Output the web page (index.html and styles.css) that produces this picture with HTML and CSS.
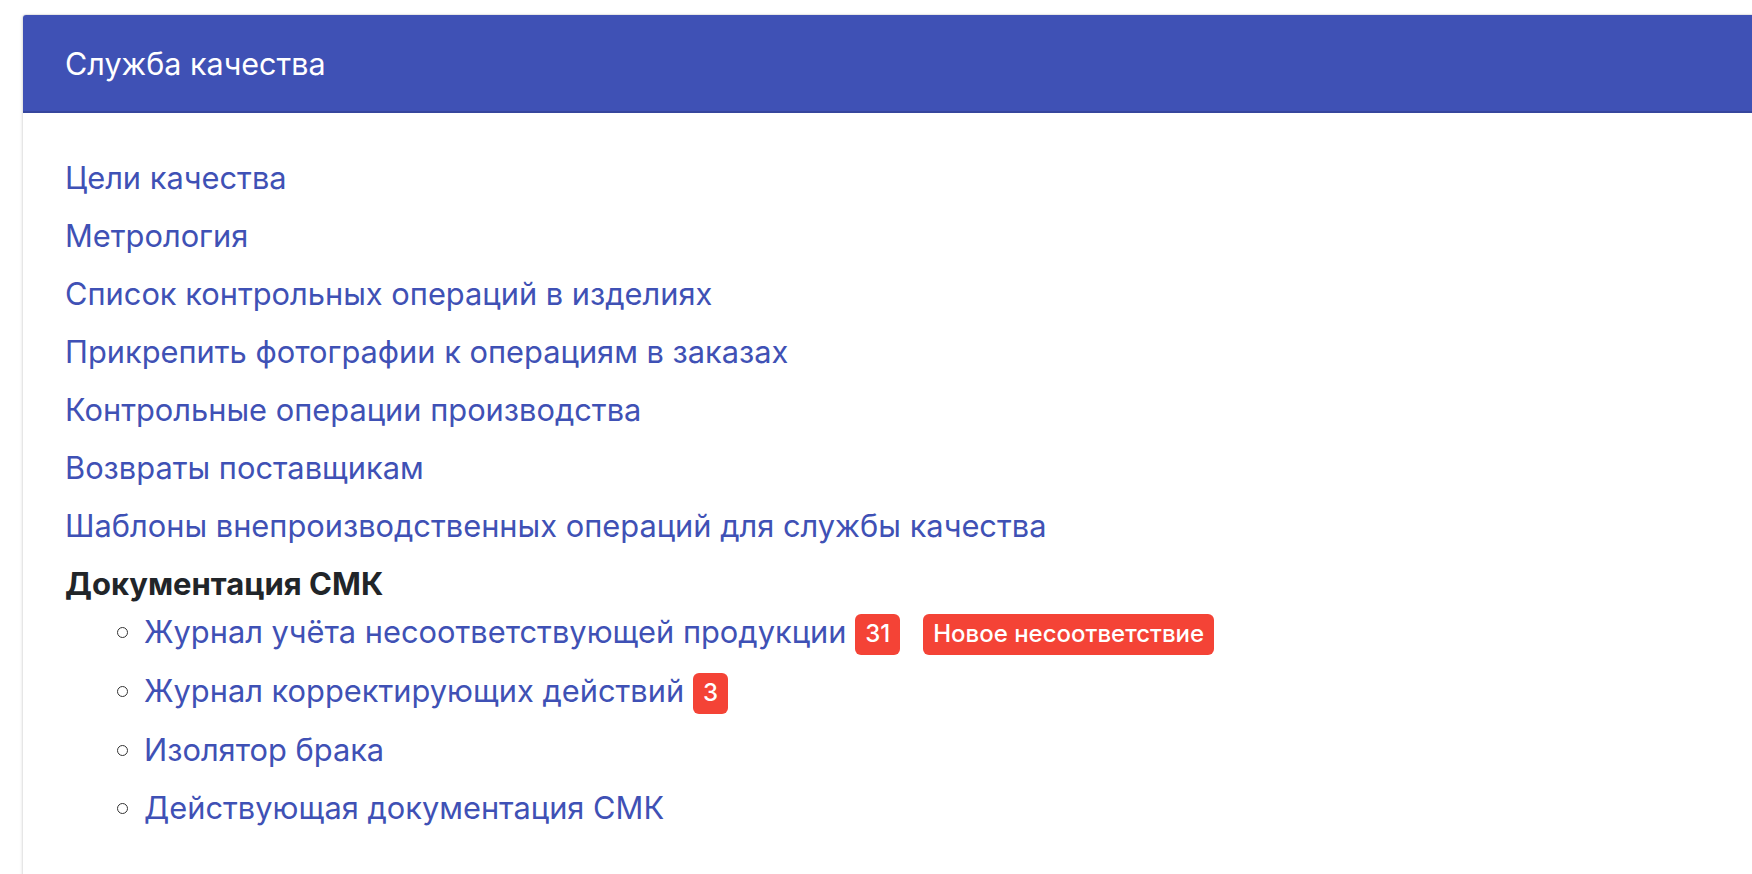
FILE: index.html
```html
<!DOCTYPE html>
<html lang="ru">
<head>
<meta charset="utf-8">
<title>Служба качества</title>
<link rel="stylesheet" href="styles.css">
</head>
<body>
<div class="page">
  <div class="card">
    <div class="card-header">Служба качества</div>
    <div class="card-body">
      <ul class="menu">
        <li><a href="#">Цели качества</a></li>
        <li><a href="#">Метрология</a></li>
        <li><a href="#">Список контрольных операций в изделиях</a></li>
        <li><a href="#">Прикрепить фотографии к операциям в заказах</a></li>
        <li><a href="#">Контрольные операции производства</a></li>
        <li><a href="#">Возвраты поставщикам</a></li>
        <li><a href="#">Шаблоны внепроизводственных операций для службы качества</a></li>
        <li class="group">
          <div class="group-title">Документация СМК</div>
          <ul class="submenu">
            <li><span class="bullet"></span><a href="#">Журнал учёта несоответствующей продукции</a> <span class="badge">31</span><a href="#" class="badge badge-action">Новое несоответствие</a></li>
            <li><span class="bullet"></span><a href="#">Журнал корректирующих действий</a> <span class="badge">3</span></li>
            <li><span class="bullet"></span><a href="#">Изолятор брака</a></li>
            <li><span class="bullet"></span><a href="#">Действующая документация СМК</a></li>
          </ul>
        </li>
      </ul>
    </div>
  </div>
</div>
</body>
</html>
```
FILE: styles.css
```css
html, body {
  margin: 0;
  padding: 0;
  background: #ffffff;
  overflow: hidden;
}

body {
  font-family: "Inter", "Noto Sans", "Liberation Sans", sans-serif;
  color: #212529;
}

.page {
  padding: 15px 0 0 23px;
  height: 874px;
  box-sizing: border-box;
}

.card {
  width: calc(100% + 40px);
  min-height: 900px;
  background: #ffffff;
  border: 1px solid #e6e6e6;
  border-radius: 4px;
  box-shadow: 0 1px 3px rgba(0, 0, 0, 0.12);
  box-sizing: border-box;
  overflow: hidden;
  margin-left: -1px;
  margin-top: -1px;
}

.card-header {
  background: #3f51b5;
  color: #ffffff;
  height: 96px;
  border-bottom: 2px solid #36469d;
  display: flex;
  align-items: center;
  padding-left: 42px;
  font-size: 30.5px;
  font-weight: 400;
}

.card-body {
  padding: 43px 42px 0 42px;
}

.menu {
  list-style: none;
  margin: 0;
  padding: 0;
  font-size: 30.8px;
}

.menu > li {
  line-height: 44px;
  margin-bottom: 14px;
}

a {
  color: #3f51b5;
  text-decoration: none;
}

.group-title {
  font-weight: 700;
  color: #212529;
  line-height: 44px;
  font-size: 31px;
}

.submenu {
  list-style: none;
  margin: 4px 0 0 0;
  padding: 0 0 0 52px;
}

.submenu li {
  line-height: 44px;
  margin-bottom: 14px;
}

.bullet {
  display: inline-block;
  width: 9px;
  height: 9px;
  border: 1.5px solid #333333;
  border-radius: 50%;
  vertical-align: middle;
  margin-right: 16px;
  position: relative;
  top: -2px;
}

.badge {
  display: inline-block;
  background: #f44336;
  color: #ffffff;
  font-size: 24px;
  font-weight: 500;
  line-height: 1;
  padding: 8px 10px 9px;
  border-radius: 6px;
  vertical-align: middle;
}

.badge-action {
  margin-left: 23px;
  padding: 8px 10px 9px;
}
```
